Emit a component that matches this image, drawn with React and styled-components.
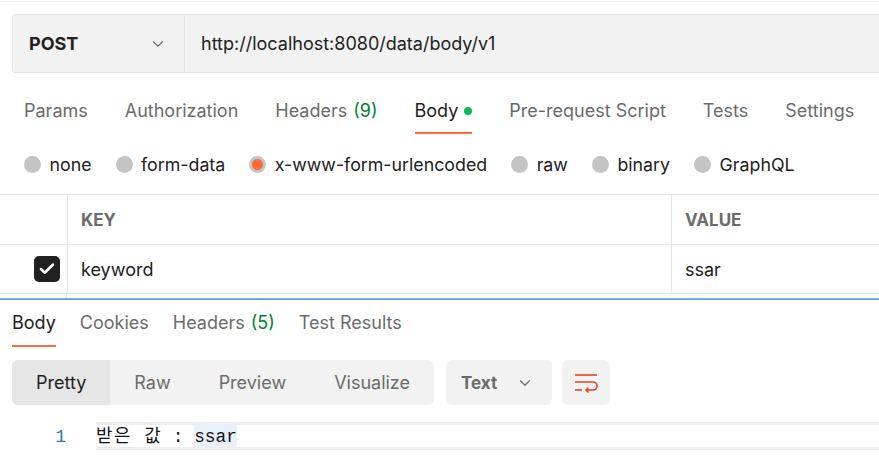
import React from 'react';
import styled, { createGlobalStyle } from 'styled-components';
import { ChevronDown, Check } from 'lucide-react';

const Global = createGlobalStyle`
  html, body { margin: 0; padding: 0; background: #fff; overflow: hidden; }
  body { font-family: Inter, "Noto Sans", "Liberation Sans", sans-serif; color: #212121; }
`;

const Page = styled.div`
  width: 879px;
  height: 466px;
  border-top: 1px solid #ececec;
  margin-top: 1px;
  overflow: hidden;
`;

const UrlBar = styled.div`
  margin: 12px 0 0 12px;
  height: 57px;
  display: flex;
  background: #f2f2f2;
  border: 1px solid #e6e6e6;
  border-right: none;
  border-radius: 4px 0 0 4px;
`;

const Method = styled.div`
  width: 172px;
  box-sizing: border-box;
  padding: 0 17px 0 16px;
  display: flex;
  align-items: center;
  justify-content: space-between;
  border-right: 1px solid #e6e6e6;
  font-weight: 700;
  font-size: 18px;
`;

const Url = styled.div`
  display: flex;
  align-items: center;
  padding-left: 16px;
  font-size: 18px;
`;

const TabBar = styled.div`
  display: flex;
  gap: ${p => p.$gap}px;
  padding-left: ${p => p.$left}px;
  margin-top: ${p => p.$top}px;
  height: ${p => p.$height}px;
`;

const Tab = styled.div`
  display: flex;
  align-items: center;
  gap: 6px;
  padding-top: ${p => p.$shift || 0}px;
  font-size: 18px;
  color: ${p => (p.$active ? '#212121' : '#6b6b6b')};
  border-bottom: 2px solid ${p => (p.$active ? '#ff6c37' : 'transparent')};
  white-space: nowrap;
`;

const Count = styled.span`
  color: #007f31;
`;

const Dot = styled.span`
  width: 8px;
  height: 8px;
  border-radius: 50%;
  background: #0cbb52;
`;

const RadioRow = styled.div`
  height: 60px;
  display: flex;
  align-items: center;
  gap: 24px;
  padding-left: 24px;
`;

const RadioItem = styled.label`
  display: flex;
  align-items: center;
  gap: 8.5px;
  font-size: 17.8px;
  color: #212121;
`;

const Radio = styled.span`
  width: 17px;
  height: 17px;
  border-radius: 50%;
  box-sizing: border-box;
  background: ${p => (p.$on ? '#ff6c37' : '#c4c4c4')};
  border: ${p => (p.$on ? '3px solid #c4c4c4' : 'none')};
`;

const Table = styled.div`
  border-top: 1px solid #e6e6e6;
`;

const Row = styled.div`
  display: grid;
  grid-template-columns: 67px 604px 1fr;
  height: ${p => p.$h}px;
  border-bottom: 1px solid #e6e6e6;
`;

const Cell = styled.div`
  display: flex;
  align-items: center;
  padding-left: ${p => p.$pad ?? 13}px;
  justify-content: ${p => (p.$end ? 'flex-end' : 'flex-start')};
  padding-right: ${p => (p.$end ? 7 : 0)}px;
  border-left: ${p => (p.$first ? 'none' : '1px solid #e6e6e6')};
  font-size: ${p => (p.$head ? 17 : 18)}px;
  font-weight: ${p => (p.$head ? 700 : 400)};
  color: ${p => (p.$head ? '#6b6b6b' : '#212121')};
`;

const CheckBox = styled.span`
  width: 26px;
  height: 26px;
  border-radius: 5px;
  background: #212121;
  display: flex;
  align-items: center;
  justify-content: center;
  color: #fff;
`;

const Gap = styled.div`
  display: grid;
  grid-template-columns: 67px 1fr;
  height: 4px;
  border-bottom: 2px solid #6fa8e8;
  & > div:first-child { border-right: 1px solid #e6e6e6; }
`;

const Controls = styled.div`
  display: flex;
  gap: 12px;
  margin: 13px 0 0 12px;
  height: 45px;
`;

const Segmented = styled.div`
  display: flex;
  background: #f2f2f2;
  border-radius: 6px;
  overflow: hidden;
`;

const Segment = styled.div`
  display: flex;
  align-items: center;
  padding: 0 24px;
  font-size: 18px;
  color: ${p => (p.$active ? '#212121' : '#6b6b6b')};
  background: ${p => (p.$active ? '#e6e6e6' : 'transparent')};
`;

const Select = styled.div`
  display: flex;
  align-items: center;
  gap: 19px;
  padding: 0 18px 0 15px;
  background: #f2f2f2;
  border-radius: 6px;
  font-size: 17px;
  font-weight: 700;
  color: #6b6b6b;
`;

const IconButton = styled.div`
  width: 48px;
  margin-left: -2px;
  display: flex;
  align-items: center;
  justify-content: center;
  background: #f2f2f2;
  border-radius: 6px;
`;

const Editor = styled.div`
  display: flex;
  margin-top: 17px;
`;

const Gutter = styled.div`
  width: 96px;
  box-sizing: border-box;
  padding: 4px 30px 0 0;
  text-align: right;
  font-family: "Liberation Mono", monospace;
  font-size: 18px;
  color: #2a7ab0;
  line-height: 22px;
`;

const CodeLine = styled.div`
  flex: 1;
  border-top: 3px solid #ededed;
  border-bottom: 3px solid #ededed;
  height: 22px;
  line-height: 24px;
  font-family: "Liberation Mono", "Noto Sans CJK KR", monospace;
  font-size: 17.8px;
  color: #111;
  white-space: pre;
`;

const Wide = styled.span`
  letter-spacing: 1.6px;
`;

const Mark = styled.span`
  background: #e8f0fa;
  display: inline-block;
  height: 22px;
`;

const WrapIcon = () => (
  <svg width="26" height="24" viewBox="0 0 26 24" fill="none" stroke="#e0461e" strokeWidth="1.6">
    <path d="M2 4 H24" />
    <path d="M2 11 H20 a4 4 0 0 1 0 8 H13" />
    <path d="M15.5 16.5 L13 19 L15.5 21.5" />
    <path d="M2 19 H9" />
  </svg>
);

export default function App() {
  return (
    <>
      <Global />
      <Page>
        <UrlBar>
          <Method>
            POST
            <ChevronDown size={18} strokeWidth={1.5} color="#6b6b6b" />
          </Method>
          <Url>http://localhost:8080/data/body/v1</Url>
        </UrlBar>

        <TabBar $gap={37} $left={24} $top={13} $height={48}>
          <Tab $shift={3}>Params</Tab>
          <Tab $shift={3}>Authorization</Tab>
          <Tab $shift={3}>Headers <Count>(9)</Count></Tab>
          <Tab $shift={3} $active>Body <Dot /></Tab>
          <Tab $shift={3}>Pre-request Script</Tab>
          <Tab $shift={3}>Tests</Tab>
          <Tab $shift={3}>Settings</Tab>
        </TabBar>

        <RadioRow>
          <RadioItem><Radio />none</RadioItem>
          <RadioItem><Radio />form-data</RadioItem>
          <RadioItem><Radio $on />x-www-form-urlencoded</RadioItem>
          <RadioItem><Radio />raw</RadioItem>
          <RadioItem><Radio />binary</RadioItem>
          <RadioItem><Radio />GraphQL</RadioItem>
        </RadioRow>

        <Table>
          <Row $h={49}>
            <Cell $first />
            <Cell $head>KEY</Cell>
            <Cell $head>VALUE</Cell>
          </Row>
          <Row $h={48}>
            <Cell $first $end $pad={0}>
              <CheckBox><Check size={18} strokeWidth={3.4} /></CheckBox>
            </Cell>
            <Cell>keyword</Cell>
            <Cell>ssar</Cell>
          </Row>
          <Gap><div /><div /></Gap>
        </Table>

        <TabBar $gap={24} $left={12} $top={0} $height={47}>
          <Tab $active>Body</Tab>
          <Tab>Cookies</Tab>
          <Tab>Headers <Count>(5)</Count></Tab>
          <Tab>Test Results</Tab>
        </TabBar>

        <Controls>
          <Segmented>
            <Segment $active>Pretty</Segment>
            <Segment>Raw</Segment>
            <Segment>Preview</Segment>
            <Segment>Visualize</Segment>
          </Segmented>
          <Select>
            Text
            <ChevronDown size={18} strokeWidth={1.5} color="#6b6b6b" />
          </Select>
          <IconButton><WrapIcon /></IconButton>
        </Controls>

        <Editor>
          <Gutter>1</Gutter>
          <CodeLine><Wide>받은 값</Wide> : <Mark>ssar</Mark></CodeLine>
        </Editor>
      </Page>
    </>
  );
}
